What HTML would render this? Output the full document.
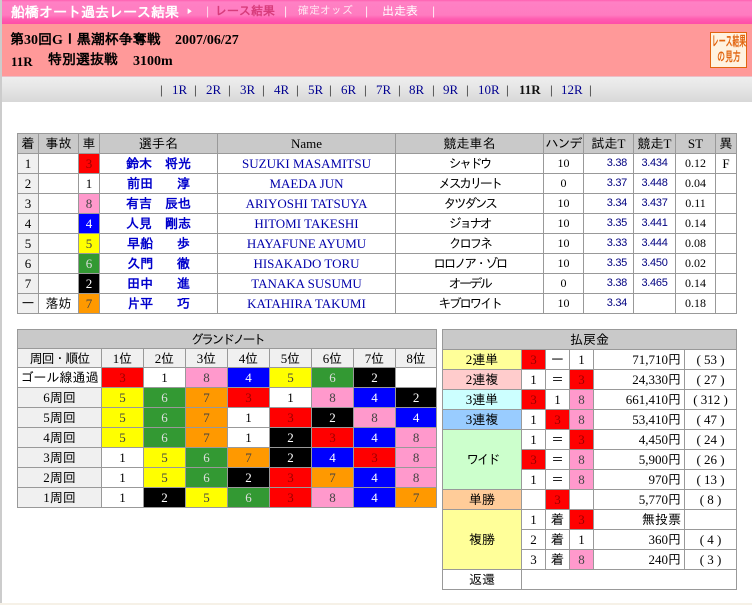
<!DOCTYPE html>
<html lang="ja"><head><meta charset="utf-8"><title>船橋オート過去レース結果</title>
<style>
html,body{margin:0;padding:0;background:#fff}
body{width:752px;height:605px;position:relative;overflow:hidden;font-family:"Liberation Serif","IPAGothic","WenQuanYi Zen Hei",serif;color:#000;font-size:13px}
.a{position:absolute;white-space:nowrap}
#strip{left:0;top:0;width:2px;height:605px;background:#ccc}
#foot{left:0;top:603px;width:752px;height:2px;background:#f6f1e7}
#bar{left:2px;top:0;width:750px;height:24px;background:linear-gradient(#ff5fb0 0,#ff80c4 2px,#ff7cc0 15px,#ff5cb0 19px,#ff4da8 24px)}
#sub{left:2px;top:24px;width:750px;height:52px;background:#ff9999}
#nav{left:2px;top:76px;width:750px;height:26px;background:linear-gradient(#e98fa0 0,#eee 1px,#e6e6e6 12px,#d8d8d8 26px)}
.t{font-family:"Liberation Sans","IPAGothic",sans-serif;line-height:16px}
.n{font-size:13px;line-height:16px;color:#000090;top:82px}
.b{font-size:13px;line-height:16px;color:#111;top:82px}
table{position:absolute;border-collapse:separate;border-spacing:1px;background:#999;table-layout:fixed;font-size:13px}
td{padding:0;background:#fff;text-align:center;overflow:hidden;white-space:nowrap;line-height:15px}
.h td,td.h{background:#c9c9c9}
td.g{background:#f0f0f0}
.nm{color:#0000cc;font-weight:bold;font-size:13px;font-family:"Liberation Sans","IPAGothic",sans-serif}
.en{color:#0000aa;font-size:13px}
.ka{letter-spacing:-2.6px}
.s{font-size:12px}
.tm{color:#000080;font-family:"Liberation Sans",sans-serif;font-size:11px;letter-spacing:-.3px}
.tr{text-align:right;padding-right:6px}
.k{background:#ff0000!important;color:#990000!important}
.w{background:#fff}
.p{background:#ff99cc!important;color:#444}
.u{background:#0000ff!important;color:#fff}
.y{background:#ffff00!important;color:#444}
.c{background:#339933!important;color:#ddd}
.d{background:#000!important;color:#fff}
.o{background:#ff9900!important;color:#444}
.r td{height:19px}
.m{text-align:right;padding-right:3px}
.sq{display:block;transform-origin:50% 50%;white-space:nowrap;width:100px;margin-left:-32px;text-align:center}
</style></head><body>
<div class="a" id="strip"></div>
<div class="a" id="bar"></div>
<div class="a" id="sub"></div>
<div class="a" id="nav"></div>
<div class="a" id="foot"></div>

<div class="a t" style="left:11px;top:4px;font-size:14px;font-weight:bold;color:#fff">船橋オート過去レース結果</div>
<div class="a t" style="left:187px;top:5px;font-size:10px;color:#fff">▶</div>
<div class="a t" style="left:206px;top:3px;font-size:12px;color:#ffd6ea">|</div>
<div class="a t" style="left:215px;top:3px;font-size:12px;color:#d83c7c;font-weight:bold">レース結果</div>
<div class="a t" style="left:284px;top:3px;font-size:12px;color:#ffe6f2">|</div>
<div class="a t" style="left:298px;top:3px;font-size:11px;color:#ffe6f2">確定オッズ</div>
<div class="a t" style="left:365px;top:3px;font-size:12px;color:#ffe6f2">|</div>
<div class="a t" style="left:382px;top:3px;font-size:12px;color:#fff">出走表</div>
<div class="a t" style="left:432px;top:3px;font-size:12px;color:#ffe6f2">|</div>

<div class="a" style="left:10px;top:32px;font-size:14px;line-height:18px;font-weight:bold">第30回GⅠ黒潮杯争奪戦</div>
<div class="a" style="left:175px;top:33px;font-size:14px;line-height:16px;font-weight:bold">2007/06/27</div>
<div class="a" style="left:11px;top:54px;font-size:13px;line-height:16px;font-weight:bold">11R</div>
<div class="a" style="left:48px;top:52px;font-size:14px;line-height:18px;font-weight:bold">特別選抜戦</div>
<div class="a" style="left:133px;top:54px;font-size:14px;line-height:16px;font-weight:bold">3100m</div>

<div class="a" style="left:710px;top:32px;width:35px;height:34px;border:1px solid #e2640f;background:#fff2e0;color:#e2640f;font:bold 14px/16px 'Liberation Sans','IPAGothic',sans-serif;overflow:hidden"><span class="sq" style="transform:scaleX(.49)">レース結果</span><span class="sq" style="font-size:13px;transform:scaleX(.6)">の見方</span></div>

<span class="a b" style="left:160px">|</span><span class="a n" style="left:172px">1R</span>
<span class="a b" style="left:194px">|</span><span class="a n" style="left:206px">2R</span>
<span class="a b" style="left:228px">|</span><span class="a n" style="left:240px">3R</span>
<span class="a b" style="left:262px">|</span><span class="a n" style="left:274px">4R</span>
<span class="a b" style="left:296px">|</span><span class="a n" style="left:308px">5R</span>
<span class="a b" style="left:329px">|</span><span class="a n" style="left:341px">6R</span>
<span class="a b" style="left:364px">|</span><span class="a n" style="left:376px">7R</span>
<span class="a b" style="left:398px">|</span><span class="a n" style="left:409px">8R</span>
<span class="a b" style="left:432px">|</span><span class="a n" style="left:443px">9R</span>
<span class="a b" style="left:466px">|</span><span class="a n" style="left:478px">10R</span>
<span class="a b" style="left:506px">|</span><span class="a b" style="left:519px;font-weight:bold">11R</span>
<span class="a b" style="left:550px">|</span><span class="a n" style="left:561px">12R</span>
<span class="a b" style="left:589px">|</span>

<table style="left:17px;top:133px;width:720px">
<colgroup><col style="width:20px"><col style="width:39px"><col style="width:20px"><col style="width:117px"><col style="width:177px"><col style="width:147px"><col style="width:39px"><col style="width:49px"><col style="width:41px"><col style="width:39px"><col style="width:20px"></colgroup>
<tr class="h r"><td>着</td><td>事故</td><td>車</td><td>選手名</td><td>Name</td><td>競走車名</td><td style="letter-spacing:-1px">ハンデ</td><td>試走T</td><td>競走T</td><td>ST</td><td>異</td></tr>
<tr class="r"><td class="g">1</td><td></td><td class="k">3</td><td class="nm">鈴木　将光</td><td class="en">SUZUKI MASAMITSU</td><td class="ka">シャドウ</td><td class="s">10</td><td class="tm tr">3.38</td><td class="tm">3.434</td><td class="s">0.12</td><td>F</td></tr>
<tr class="r"><td class="g">2</td><td></td><td>1</td><td class="nm">前田　&nbsp;&nbsp;&nbsp;淳</td><td class="en">MAEDA JUN</td><td class="ka">メスカリート</td><td class="s">0</td><td class="tm tr">3.37</td><td class="tm">3.448</td><td class="s">0.04</td><td></td></tr>
<tr class="r"><td class="g">3</td><td></td><td class="p">8</td><td class="nm">有吉　辰也</td><td class="en">ARIYOSHI TATSUYA</td><td class="ka">タツダンス</td><td class="s">10</td><td class="tm tr">3.34</td><td class="tm">3.437</td><td class="s">0.11</td><td></td></tr>
<tr class="r"><td class="g">4</td><td></td><td class="u">4</td><td class="nm">人見　剛志</td><td class="en">HITOMI TAKESHI</td><td class="ka">ジョナオ</td><td class="s">10</td><td class="tm tr">3.35</td><td class="tm">3.441</td><td class="s">0.14</td><td></td></tr>
<tr class="r"><td class="g">5</td><td></td><td class="y">5</td><td class="nm">早船　&nbsp;&nbsp;&nbsp;歩</td><td class="en">HAYAFUNE AYUMU</td><td class="ka">クロフネ</td><td class="s">10</td><td class="tm tr">3.33</td><td class="tm">3.444</td><td class="s">0.08</td><td></td></tr>
<tr class="r"><td class="g">6</td><td></td><td class="c">6</td><td class="nm">久門　&nbsp;&nbsp;&nbsp;徹</td><td class="en">HISAKADO TORU</td><td class="ka">ロロノア・ゾロ</td><td class="s">10</td><td class="tm tr">3.35</td><td class="tm">3.450</td><td class="s">0.02</td><td></td></tr>
<tr class="r"><td class="g">7</td><td></td><td class="d">2</td><td class="nm">田中　&nbsp;&nbsp;&nbsp;進</td><td class="en">TANAKA SUSUMU</td><td class="ka">オーデル</td><td class="s">0</td><td class="tm tr">3.38</td><td class="tm">3.465</td><td class="s">0.14</td><td></td></tr>
<tr class="r"><td class="g">一</td><td>落妨</td><td class="o">7</td><td class="nm">片平　&nbsp;&nbsp;&nbsp;巧</td><td class="en">KATAHIRA TAKUMI</td><td class="ka">キブロワイト</td><td class="s">10</td><td class="tm tr">3.34</td><td></td><td class="s">0.18</td><td></td></tr>
</table>

<table style="left:17px;top:329px;width:420px">
<colgroup><col style="width:83px"><col style="width:41px"><col style="width:41px"><col style="width:41px"><col style="width:41px"><col style="width:41px"><col style="width:41px"><col style="width:41px"><col style="width:40px"></colgroup>
<tr class="h"><td colspan="9" class="ka" style="height:18px">グランドノート</td></tr>
<tr><td class="g" style="height:18px;letter-spacing:-1px">周回・順位</td><td class="g">1位</td><td class="g">2位</td><td class="g">3位</td><td class="g">4位</td><td class="g">5位</td><td class="g">6位</td><td class="g">7位</td><td class="g">8位</td></tr>
<tr class="r"><td>ゴール線通過</td><td class="k">3</td><td>1</td><td class="p">8</td><td class="u">4</td><td class="y">5</td><td class="c">6</td><td class="d">2</td><td></td></tr>
<tr class="r"><td class="g">6周回</td><td class="y">5</td><td class="c">6</td><td class="o">7</td><td class="k">3</td><td>1</td><td class="p">8</td><td class="u">4</td><td class="d">2</td></tr>
<tr class="r"><td class="g">5周回</td><td class="y">5</td><td class="c">6</td><td class="o">7</td><td>1</td><td class="k">3</td><td class="d">2</td><td class="p">8</td><td class="u">4</td></tr>
<tr class="r"><td class="g">4周回</td><td class="y">5</td><td class="c">6</td><td class="o">7</td><td>1</td><td class="d">2</td><td class="k">3</td><td class="u">4</td><td class="p">8</td></tr>
<tr class="r"><td class="g">3周回</td><td>1</td><td class="y">5</td><td class="c">6</td><td class="o">7</td><td class="d">2</td><td class="u">4</td><td class="k">3</td><td class="p">8</td></tr>
<tr class="r"><td class="g">2周回</td><td>1</td><td class="y">5</td><td class="c">6</td><td class="d">2</td><td class="k">3</td><td class="o">7</td><td class="u">4</td><td class="p">8</td></tr>
<tr class="r"><td class="g">1周回</td><td>1</td><td class="d">2</td><td class="y">5</td><td class="c">6</td><td class="k">3</td><td class="p">8</td><td class="u">4</td><td class="o">7</td></tr>
</table>

<table style="left:442px;top:329px;width:295px">
<colgroup><col style="width:78px"><col style="width:23px"><col style="width:23px"><col style="width:23px"><col style="width:90px"><col style="width:51px"></colgroup>
<tr class="h r"><td colspan="6">払戻金</td></tr>
<tr class="r"><td style="background:#ffff99">2連単</td><td class="k">3</td><td>ー</td><td>1</td><td class="m">71,710円</td><td>( 53 )</td></tr>
<tr class="r"><td style="background:#ffcccc">2連複</td><td>1</td><td>＝</td><td class="k">3</td><td class="m">24,330円</td><td>( 27 )</td></tr>
<tr class="r"><td style="background:#ccffff">3連単</td><td class="k">3</td><td>1</td><td class="p">8</td><td class="m">661,410円</td><td>( 312 )</td></tr>
<tr class="r"><td style="background:#99ccff">3連複</td><td>1</td><td class="k">3</td><td class="p">8</td><td class="m">53,410円</td><td>( 47 )</td></tr>
<tr class="r"><td rowspan="3" class="ka" style="background:#ccffcc">ワイド</td><td>1</td><td>＝</td><td class="k">3</td><td class="m">4,450円</td><td>( 24 )</td></tr>
<tr class="r"><td class="k">3</td><td>＝</td><td class="p">8</td><td class="m">5,900円</td><td>( 26 )</td></tr>
<tr class="r"><td>1</td><td>＝</td><td class="p">8</td><td class="m">970円</td><td>( 13 )</td></tr>
<tr class="r"><td style="background:#ffcc99">単勝</td><td></td><td class="k">3</td><td></td><td class="m">5,770円</td><td>( 8 )</td></tr>
<tr class="r"><td rowspan="3" style="background:#ffff99">複勝</td><td>1</td><td>着</td><td class="k">3</td><td class="m">無投票</td><td></td></tr>
<tr class="r"><td>2</td><td>着</td><td>1</td><td class="m">360円</td><td>( 4 )</td></tr>
<tr class="r"><td>3</td><td>着</td><td class="p">8</td><td class="m">240円</td><td>( 3 )</td></tr>
<tr class="r"><td>返還</td><td colspan="5"></td></tr>
</table>
</body></html>
